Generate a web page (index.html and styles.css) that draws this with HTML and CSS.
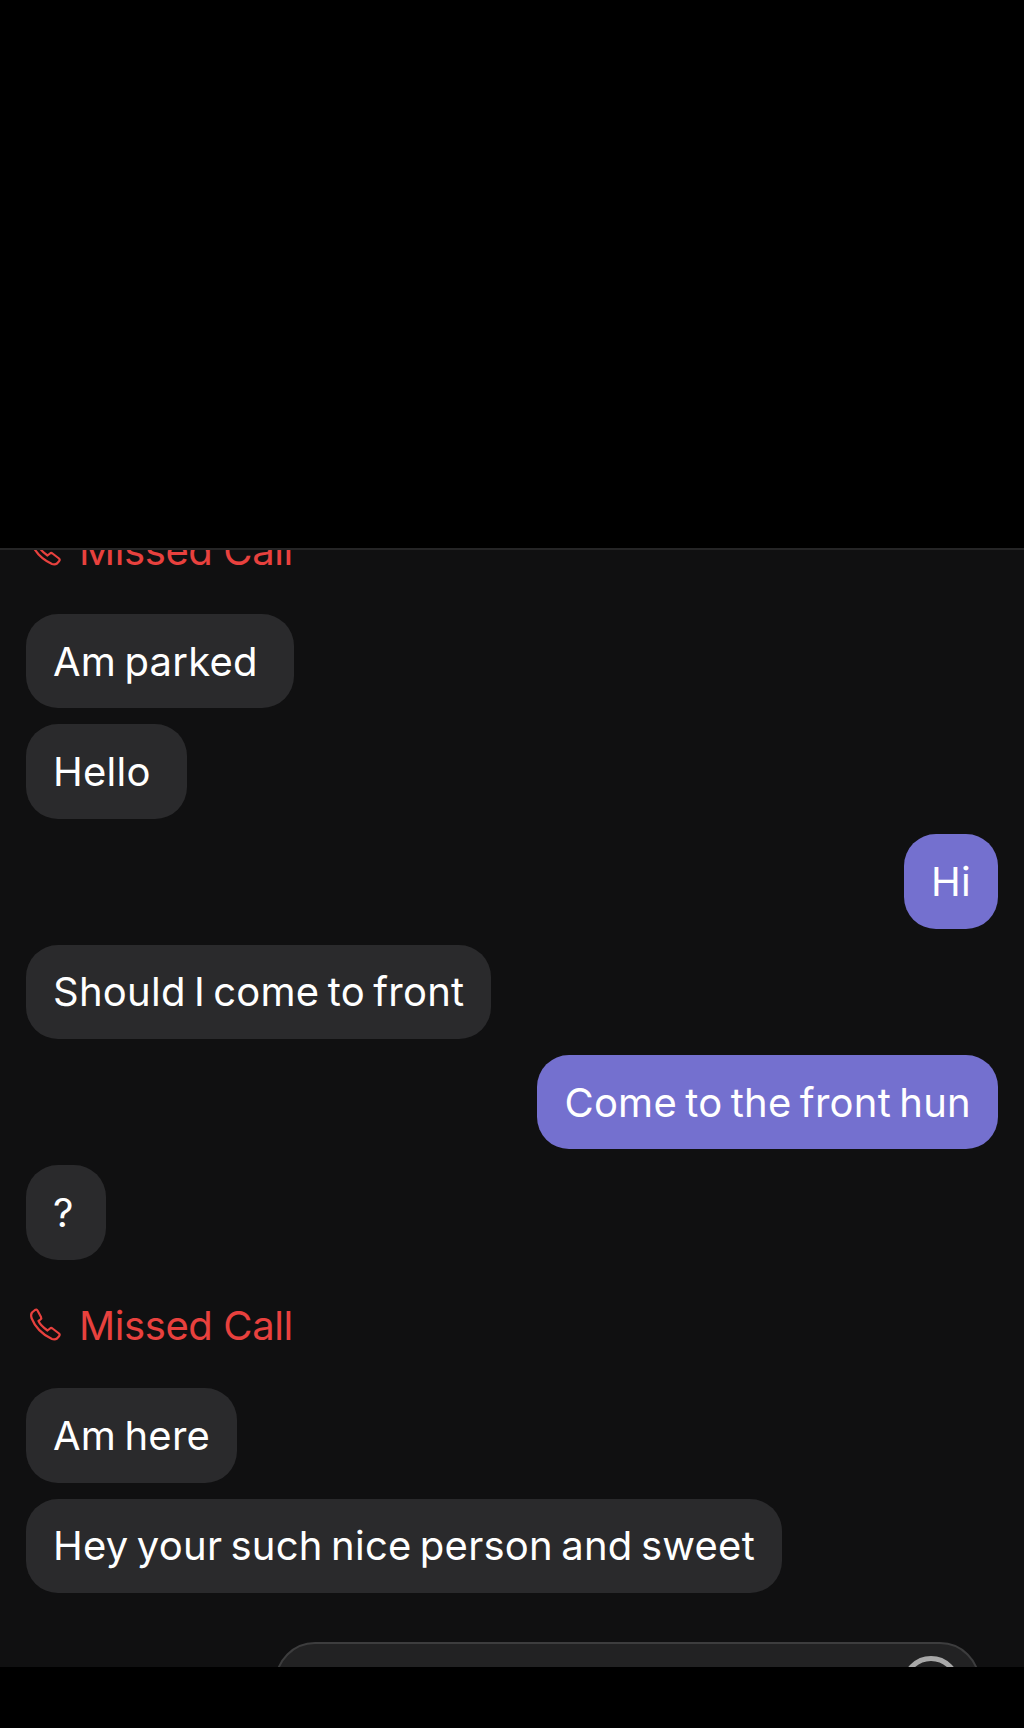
FILE: index.html
```html
<!DOCTYPE html>
<html lang="en">
<head>
  <meta charset="UTF-8" />
  <meta name="viewport" content="width=device-width, initial-scale=1.0" />
  <title>Messages</title>
  <link rel="stylesheet" href="styles.css">
</head>
<body>

  <div class="top-black"></div>

  <div class="chat">
    <div class="missed missed-cut">
      <svg class="phone-icon" viewBox="0 0 34 34"><path d="M3 4.500 6 2q1.500-1 2.500.5L12 9q.8 1.500-.5 2.500L9.500 13q2 4.500 9 9.500l2.500-2q1.200-1 2.500 0l6.500 5q1.200 1 .2 2.500L28 30.500q-2 1.500-5 .5Q8 24 2.500 10 1.500 6.500 3 4.500Z"/></svg>
      Missed Call
    </div>

    <div class="bubble loose">Am parked</div>
    <div class="bubble loose">Hello</div>
    <div class="bubble me">Hi</div>
    <div class="bubble">Should I come to front</div>
    <div class="bubble me">Come to the front hun</div>
    <div class="bubble short">?</div>

    <div class="missed">
      <svg class="phone-icon" viewBox="0 0 34 34"><path d="M3 4.500 6 2q1.500-1 2.500.5L12 9q.8 1.500-.5 2.500L9.500 13q2 4.500 9 9.500l2.500-2q1.200-1 2.500 0l6.500 5q1.200 1 .2 2.500L28 30.500q-2 1.500-5 .5Q8 24 2.500 10 1.500 6.500 3 4.500Z"/></svg>
      Missed Call
    </div>

    <div class="bubble">Am here</div>
    <div class="bubble">Hey your such nice person and sweet</div>

    <div class="input-box">
      <div class="input-ring"></div>
    </div>
  </div>

  <div class="bottom-black"></div>

</body>
</html>
```

FILE: styles.css
```css
* {
  box-sizing: border-box;
}

body {
  font-family: Inter, "Liberation Sans", sans-serif;
  margin: 0;
  padding: 0;
  background: #000;
  color: #fff;
  height: 1728px;
  overflow: hidden;
  display: flex;
  flex-direction: column;
}

.top-black {
  height: 548px;
  background: #000;
  flex: none;
}

.bottom-black {
  height: 61px;
  background: #000;
  flex: none;
}

.chat {
  flex: 1;
  overflow: hidden;
  background: #101011;
  border-top: 2px solid #252526;
  padding: 0 26px;
  display: flex;
  flex-direction: column;
  align-items: flex-start;
  gap: 15.8px;
}

.bubble {
  height: 94.5px;
  padding: 0 27px;
  display: flex;
  align-items: center;
  background: #2a2a2c;
  border-radius: 32px;
  font-size: 40px;
  letter-spacing: 0.25px;
  word-spacing: -3.2px;
  white-space: nowrap;
  flex: none;
}

.bubble.loose {
  padding-right: 36px;
}

.bubble.short {
  padding-right: 32px;
}

.bubble.me {
  align-self: flex-end;
  background: #7470cf;
}

.missed {
  height: 40px;
  margin: 29.5px 0 27.5px;
  display: flex;
  align-items: center;
  gap: 16px;
  color: #e8413e;
  font-size: 40px;
  letter-spacing: -0.4px;
  white-space: nowrap;
  flex: none;
}

.missed-cut {
  margin: -20px 0 28px;
}

.phone-icon {
  width: 34px;
  height: 34px;
  margin-left: 3px;
  fill: none;
  stroke: #e8413e;
  stroke-width: 2.2;
  stroke-linejoin: round;
  flex: none;
}

.input-box {
  align-self: flex-end;
  flex: none;
  width: 705px;
  height: 100px;
  margin: 33px 18px 0 0;
  background: #222223;
  border: 2px solid #3d3d3e;
  border-radius: 40px;
  padding: 12px 18px 0 0;
  display: flex;
  justify-content: flex-end;
}

.input-ring {
  width: 58px;
  height: 58px;
  border: 5px solid #a8a8a8;
  border-radius: 50%;
}
```
